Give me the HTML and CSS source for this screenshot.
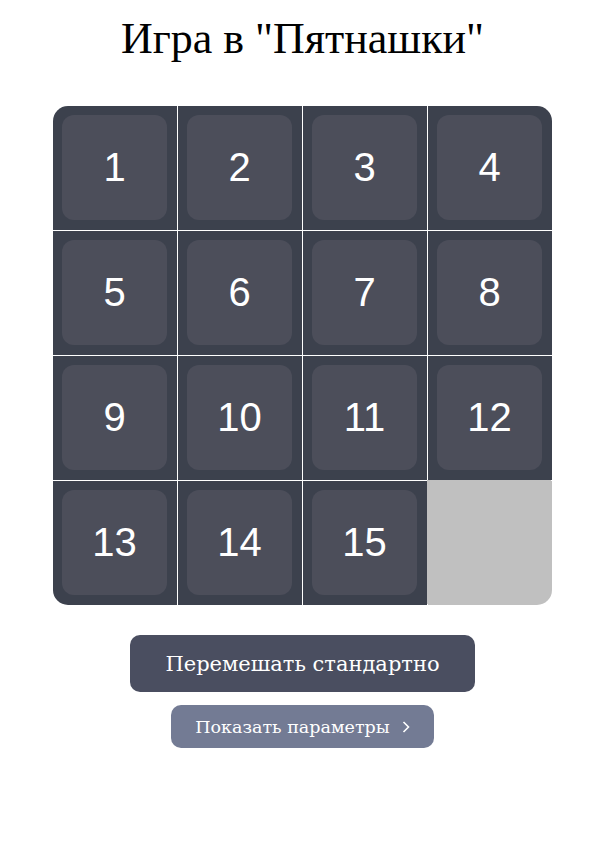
FILE: index.html
```html
<!DOCTYPE html>
<html lang="ru">
<head>
<meta charset="utf-8">
<title>Пятнашки</title>
<link rel="stylesheet" href="styles.css">
</head>
<body>
<main class="page">
  <h1 class="title">Игра в "Пятнашки"</h1>
  <div class="board">
    <div class="cell"><div class="tile">1</div></div>
    <div class="cell"><div class="tile">2</div></div>
    <div class="cell"><div class="tile">3</div></div>
    <div class="cell"><div class="tile">4</div></div>
    <div class="cell"><div class="tile">5</div></div>
    <div class="cell"><div class="tile">6</div></div>
    <div class="cell"><div class="tile">7</div></div>
    <div class="cell"><div class="tile">8</div></div>
    <div class="cell"><div class="tile">9</div></div>
    <div class="cell"><div class="tile">10</div></div>
    <div class="cell"><div class="tile">11</div></div>
    <div class="cell"><div class="tile">12</div></div>
    <div class="cell"><div class="tile">13</div></div>
    <div class="cell"><div class="tile">14</div></div>
    <div class="cell"><div class="tile">15</div></div>
    <div class="cell cell-empty"></div>
  </div>
  <div class="actions">
    <button class="btn btn-primary" type="button">Перемешать стандартно</button>
    <button class="btn btn-secondary" type="button">Показать параметры
      <svg class="chevron" width="8" height="12" viewBox="0 0 8 12" aria-hidden="true"><polyline points="1.5,1 6.5,6 1.5,11" fill="none" stroke="#ffffff" stroke-width="1.6"/></svg>
    </button>
  </div>
</main>
</body>
</html>
```
FILE: styles.css
```css
html, body {
  margin: 0;
  padding: 0;
  background: #ffffff;
}

.page {
  padding: 0 0 0 10px;
  display: flex;
  flex-direction: column;
  align-items: center;
  font-family: "Liberation Serif", "Times New Roman", serif;
}

.title {
  margin: 15px 0 0;
  font-size: 44px;
  line-height: 48px;
  font-weight: normal;
  color: #000000;
}

.board {
  margin-top: 43px;
  width: 499px;
  display: grid;
  grid-template-columns: repeat(4, 124px);
  grid-auto-rows: 124px;
  gap: 1px;
  background: #ffffff;
  border-radius: 15px;
  overflow: hidden;
}

.cell {
  background: #3c414d;
  padding: 9px 10px 10px 9px;
}

.cell-empty {
  background: #c0c0c0;
  box-shadow: -1px -1px 0 #c0c0c0;
}

.tile {
  width: 105px;
  height: 105px;
  border-radius: 12px;
  background: #4c4e5a;
  color: #ffffff;
  display: flex;
  align-items: center;
  justify-content: center;
  font-family: "Liberation Sans", Arial, sans-serif;
  font-size: 40px;
}

.actions {
  margin-top: 30px;
  display: flex;
  flex-direction: column;
  align-items: center;
  gap: 13px;
}

.btn {
  border: none;
  color: #ffffff;
  font-family: "DejaVu Serif", Georgia, serif;
  border-radius: 10px;
  display: flex;
  align-items: center;
  justify-content: center;
  cursor: pointer;
}

.btn-primary {
  width: 345px;
  height: 57px;
  background: #4a4e60;
  font-size: 21px;
}

.btn-secondary {
  width: 263px;
  height: 43px;
  background: #737b94;
  font-size: 17.5px;
  gap: 12px;
}

.chevron {
  display: block;
}
```
